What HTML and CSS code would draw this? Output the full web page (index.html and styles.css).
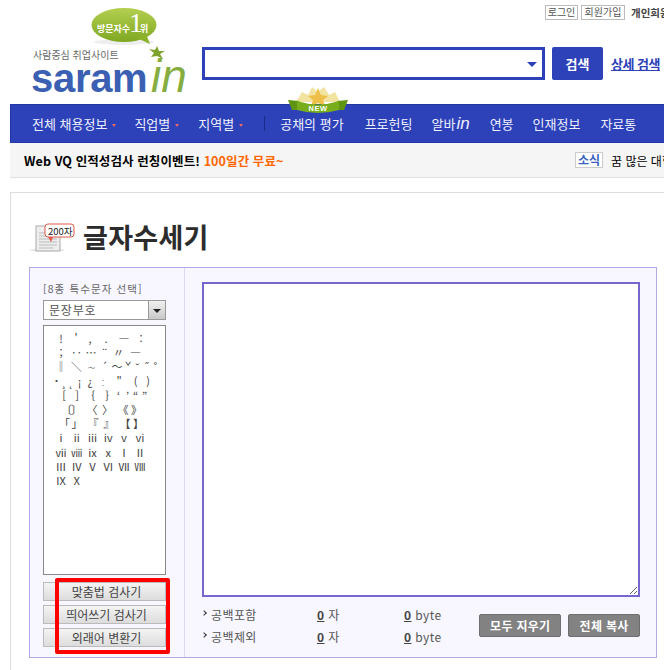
FILE: index.html
```html
<!DOCTYPE html>
<html lang="ko">
<head>
    <meta charset="UTF-8">
    <title>글자수세기</title>
    <link rel="stylesheet" href="styles.css">
</head>
<body>
<div class="page">
    <div class="header">
        <svg class="logo" width="192" height="104" viewBox="0 0 192 104">
            <defs>
                <linearGradient id="bub" x1="0" y1="0" x2="0" y2="1">
                    <stop offset="0" stop-color="#b4cf50"/>
                    <stop offset="1" stop-color="#7fa822"/>
                </linearGradient>
            </defs>
            <ellipse cx="124" cy="42" rx="30" ry="3" fill="#eee"/>
            <ellipse cx="124" cy="25" rx="32.5" ry="17" fill="url(#bub)"/>
            <path d="M137 38 L150 44 L146 34 Z" fill="#8bb02a"/>
            <text x="97" y="32" class="bub-text">방문자수</text>
            <text x="129" y="32" class="bub-one">1</text>
            <text x="140" y="32" class="bub-text">위</text>
            <text x="33" y="59" class="tagline">사람중심 취업사이트</text>
            <path d="M157 46 L159 51 L165 51 L160 54 L163 59 L157 56 L151 57 L154 53 L149 49 L155 50 Z" fill="#7da32e"/>
            <text x="31" y="92" class="saram">saram</text>
            <text x="151" y="92" class="in">in</text>
        </svg>
        <div class="head-right">
            <div class="util">
                <a class="util-btn">로그인</a>
                <a class="util-btn wide">회원가입</a>
                <b class="util-now">개인회원</b>
            </div>
            <div class="search">
                <div class="search-box"><span class="search-arrow"></span></div>
                <button class="search-btn">검색</button>
                <a class="search-more">상세 검색</a>
            </div>
        </div>
    </div>

    <div class="nav">
        <a class="n1">전체 채용정보<i class="caret"></i></a>
        <a class="n2">직업별<i class="caret"></i></a>
        <a class="n3">지역별<i class="caret"></i></a>
        <span class="nav-div"></span>
        <a class="n4">공채의 평가</a>
        <a class="n5">프로헌팅</a>
        <a class="n6">알바<em>in</em></a>
        <a class="n7">연봉</a>
        <a class="n8">인재정보</a>
        <a class="n9">자료통</a>
        <svg class="new-badge" width="60" height="28" viewBox="0 0 60 28">
            <path d="M8 16 L14 6 L20 9 L24 1 L30 6 L36 1 L41 9 L47 6 L52 16 Z" fill="#f3e3a0"/>
            <path d="M30 2 L33 9 L40 10 L35 14 L37 20 L30 17 L23 20 L25 14 L20 10 L27 9 Z" fill="#eec04a"/>
            <path d="M0 14 L11 15 L11 24 L4 24 Z M60 14 L49 15 L49 24 L56 24 Z" fill="#5f9412"/>
            <path d="M9 15 Q30 22 51 15 L51 24 Q30 30 9 24 Z" fill="#78ae1c"/>
            <text x="30" y="25" class="new-text">NEW</text>
        </svg>
    </div>

    <div class="notice">
        <div class="notice-main">Web VQ 인적성검사 런칭이벤트! <span>100일간 무료~</span></div>
        <div class="notice-news"><span class="news-tag">소식</span>꿈 많은 대학생</div>
    </div>

    <div class="card">
        <div class="title">
            <svg width="46" height="32" viewBox="0 0 46 32">
                <ellipse cx="18" cy="29" rx="18" ry="1.5" fill="#e4e4e4"/>
                <rect x="7" y="5" width="24" height="25" fill="#eee" stroke="#aaa"/>
                <path d="M10 12h18M10 15h18M10 18h18M10 21h18M10 24h18M10 27h14" stroke="#bbb"/>
                <path d="M19 16 L22 21 L24 16 Z" fill="#e85a4a"/>
                <rect x="16" y="3" width="29" height="13" rx="3" fill="#fff" stroke="#e05a4a"/>
                <text x="19" y="13.5" class="icon-text">200자</text>
            </svg>
            <h1>글자수세기</h1>
        </div>
        <div class="panel">
            <div class="side">
                <div class="side-label">[8종 특수문자 선택]</div>
                <div class="select">문장부호<span class="select-btn"></span></div>
                <div class="chars">
                    <div class="r r1"><span>!</span><span>'</span><span>,</span><span>.</span><span>―</span><span>:</span></div>
                    <div class="r r2"><span>;</span><span>‥</span><span>…</span><span>¨</span><span>〃</span><span>―</span></div>
                    <div class="r r3"><span>‖</span><span>＼</span><span>∼</span><span>´</span><span>～</span><span>ˇ</span><span>˘</span><span>˝</span><span>˚</span></div>
                    <div class="r r4"><span>˙</span><span>¸</span><span>˛</span><span>¡</span><span>¿</span><span>ː</span><span>"</span><span>(</span><span>)</span></div>
                    <div class="r r5"><span>[</span><span>]</span><span>{</span><span>}</span><span>‘</span><span>’</span><span>“</span><span>”</span></div>
                    <div class="r r6"><span>〔</span><span>〕</span><span>〈</span><span>〉</span><span>《</span><span>》</span></div>
                    <div class="r r7"><span>「</span><span>」</span><span>『</span><span>』</span><span>【</span><span>】</span></div>
                    <div class="r r8"><span>ⅰ</span><span>ⅱ</span><span>ⅲ</span><span>ⅳ</span><span>ⅴ</span><span>ⅵ</span></div>
                    <div class="r r8"><span>ⅶ</span><span>ⅷ</span><span>ⅸ</span><span>ⅹ</span><span>Ⅰ</span><span>Ⅱ</span></div>
                    <div class="r r8"><span>Ⅲ</span><span>Ⅳ</span><span>Ⅴ</span><span>Ⅵ</span><span>Ⅶ</span><span>Ⅷ</span></div>
                    <div class="r r8"><span>Ⅸ</span><span>Ⅹ</span></div>
                </div>
                <div class="tools">
                    <button>맞춤법 검사기</button>
                    <button>띄어쓰기 검사기</button>
                    <button>외래어 변환기</button>
                </div>
                <div class="mark"></div>
            </div>
            <div class="main">
                <textarea class="text-in"></textarea>
                <div class="foot">
                    <div class="counts">
                        <div class="count"><span class="count-label">공백포함</span><span class="count-a"><u>0</u> 자</span><span><u>0</u> byte</span></div>
                        <div class="count"><span class="count-label">공백제외</span><span class="count-a"><u>0</u> 자</span><span><u>0</u> byte</span></div>
                    </div>
                    <button class="gray-btn wide">모두 지우기</button>
                    <button class="gray-btn">전체 복사</button>
                </div>
            </div>
        </div>
    </div>
</div>
</body>
</html>
```

FILE: styles.css
```css
html, body {
    margin: 0;
    overflow: hidden;
    height: 670px;
}

body {
    font-family: "Noto Sans CJK KR", "Liberation Sans", sans-serif;
    font-size: 12px;
    color: #444;
    background: #fff;
}

.page {
    width: 720px;
}

/* header */
.header {
    display: flex;
    height: 104px;
}

.logo {
    display: block;
    width: 192px;
    flex: none;
}

.bub-text {
    font-size: 9px;
    font-weight: 700;
    fill: #fff;
}

.bub-one {
    font-family: "Liberation Serif", serif;
    font-size: 28px;
    fill: #fff;
}

.tagline {
    font-size: 10px;
    fill: #666;
}

.saram {
    font-family: "Liberation Sans", sans-serif;
    font-size: 40px;
    font-weight: 700;
    fill: #3b5fb3;
    letter-spacing: -.3px;
}

.in {
    font-family: "Liberation Sans", sans-serif;
    font-size: 46px;
    font-style: italic;
    fill: #86ad3f;
}

.head-right {
    margin-left: 10px;
    flex: 1;
}

.util {
    display: flex;
    align-items: center;
    gap: 3px;
    margin: 5px 0 0 343px;
    height: 15px;
}

.util-btn {
    box-sizing: border-box;
    width: 33px;
    height: 15px;
    border: 1px solid #bbb;
    line-height: 12px;
    font-size: 10px;
    color: #555;
    text-align: center;
    white-space: nowrap;
}

.util-btn.wide {
    width: 44px;
}

.util-now {
    margin-left: 3px;
    font-size: 10.5px;
    color: #444;
    white-space: nowrap;
}

.search {
    display: flex;
    margin-top: 27px;
    height: 33px;
}

.search-box {
    width: 337px;
    border: 3px solid #2d41b9;
    position: relative;
}

.search-arrow {
    position: absolute;
    right: 5px;
    top: 12px;
    border-left: 5px solid transparent;
    border-right: 5px solid transparent;
    border-top: 5px solid #2d41b9;
}

.search-btn {
    width: 51px;
    margin-left: 7px;
    padding: 0;
    border: 0;
    border-radius: 2px;
    background: #2d41b9;
    color: #fff;
    font: 700 13px "Noto Sans CJK KR", sans-serif;
}

.search-more {
    margin-left: 8px;
    line-height: 33px;
    font-size: 13px;
    font-weight: 700;
    color: #2d41b9;
    text-decoration: underline;
    letter-spacing: -.5px;
}

/* nav */
.nav {
    position: relative;
    display: flex;
    align-items: center;
    height: 37px;
    margin-left: 10px;
    padding-left: 21px;
    background: #2d41b9;
    border: 1px solid #2436a3;
    border-right: 0;
    color: #eef0ff;
    font-size: 13px;
}

.nav a {
    white-space: nowrap;
}

.caret {
    display: inline-block;
    margin-left: 5px;
    vertical-align: middle;
    border-left: 2.5px solid transparent;
    border-right: 2.5px solid transparent;
    border-top: 3px solid #e86a6a;
}

.n2 { margin-left: 18px; }
.n3 { margin-left: 19px; }
.n4 { margin-left: 15px; }
.n5 { margin-left: 21px; }
.n6 { margin-left: 19px; }
.n7 { margin-left: 20px; }
.n8 { margin-left: 19px; }
.n9 { margin-left: 20px; }

.nav em {
    font-family: "Liberation Sans", sans-serif;
    font-size: 17px;
    line-height: 1;
    margin-left: 1px;
}

.nav-div {
    width: 1px;
    height: 15px;
    margin-left: 21px;
    background: #1b2b8c;
}

.new-badge {
    position: absolute;
    left: 277px;
    top: -19px;
}

.new-text {
    font: 700 7.5px "Liberation Sans", sans-serif;
    fill: #fff;
    text-anchor: middle;
    letter-spacing: .5px;
}

/* notice */
.notice {
    display: flex;
    justify-content: space-between;
    align-items: center;
    height: 34px;
    margin-left: 10px;
    padding-left: 14px;
    background: #f5f5f5;
    border-bottom: 1px solid #e2e2e2;
    color: #000;
}

.notice-main {
    font-size: 12.5px;
    font-weight: 700;
    letter-spacing: .1px;
}

.notice-main span {
    color: #f60;
}

.notice-news {
    display: flex;
    align-items: center;
    width: 145px;
    white-space: nowrap;
}

.news-tag {
    box-sizing: border-box;
    width: 28px;
    height: 16px;
    margin-right: 8px;
    border: 1px solid #ccc;
    background: #fff;
    color: #3a5fc0;
    font-weight: 700;
    line-height: 13px;
    text-align: center;
}

/* card */
.card {
    margin: 14px 0 0 10px;
    padding: 0 0 13px 18px;
    border: 1px solid #ddd;
    border-right: 0;
}

.title {
    display: flex;
    align-items: center;
    height: 74px;
    padding-top: 14px;
    box-sizing: border-box;
    gap: 8px;
}

.title svg {
    flex: none;
}

.title h1 {
    margin: 0;
    font-size: 27px;
    font-weight: 700;
    line-height: 36px;
    color: #2c2c2c;
    letter-spacing: .3px;
}

.icon-text {
    font-size: 9.5px;
    fill: #222;
}

.panel {
    display: flex;
    box-sizing: border-box;
    width: 628px;
    height: 391px;
    background: #f8f7ff;
    border: 1px solid #b3a8e4;
}

.side {
    position: relative;
    box-sizing: border-box;
    width: 155px;
    padding: 13px 18px 0 13px;
    border-right: 1px solid #dcd8f2;
}

.side-label {
    height: 19px;
    font-size: 10.5px;
    line-height: 15px;
    color: #666;
    letter-spacing: 1.1px;
    white-space: nowrap;
}

.select {
    position: relative;
    box-sizing: border-box;
    height: 20px;
    padding-left: 5px;
    border: 1px solid #999;
    background: #fff;
    line-height: 17px;
    letter-spacing: .8px;
    color: #555;
}

.select-btn {
    position: absolute;
    right: 0;
    top: 0;
    width: 16px;
    height: 18px;
    border-left: 1px solid #999;
    background: linear-gradient(#f0f0f0, #c8c8c8);
}

.select-btn::after {
    content: "";
    position: absolute;
    left: 4px;
    top: 8px;
    border-left: 4px solid transparent;
    border-right: 4px solid transparent;
    border-top: 4px solid #222;
}

.chars {
    box-sizing: border-box;
    height: 250px;
    margin-top: 5px;
    padding-top: 5px;
    border: 1px solid #888;
    background: #fff;
    overflow: hidden;
}

.r {
    display: grid;
    height: 14.2px;
    margin-left: 9px;
    font-size: 11px;
    line-height: 14px;
    color: #444;
}

.r span {
    text-align: center;
    white-space: nowrap;
}

/* each row of marks has its own spacing */
.r1 { grid-template-columns: 16px 14px 14px 18px 18px 16px; }
.r2 { grid-template-columns: 16px 15px 14px 13px 15px 19px; }
.r3 { grid-template-columns: 16px 15px 14px 13px 12px 10px 9px 9px 9px; }
.r4 { grid-template-columns: 7px 7px 8px 9px 12px 14px 18px 15px 10px; }
.r5 { grid-template-columns: 10px 16px 16px 12px 11px 7px 9px 9px; margin-left: 15px; }
.r6 { grid-template-columns: 8px 15px 16px 15px 16px 11px; margin-left: 17px; }
.r7 { grid-template-columns: 10px 16px 16px 16px 16px 9px; margin-left: 15px; }
.r8 { grid-template-columns: repeat(6, 15.8px); }

.tools {
    display: flex;
    flex-direction: column;
    gap: 4px;
    margin-top: 7px;
}

.tools button {
    height: 19px;
    padding: 0 0 0 4px;
    border: 1px solid #bbb;
    background: linear-gradient(#f4f4f4, #dcdcdc);
    color: #444;
    font: 12px "Noto Sans CJK KR", sans-serif;
    line-height: 16px;
}

.mark {
    position: absolute;
    left: 25px;
    top: 310px;
    width: 107px;
    height: 68px;
    border: 4px solid #f00;
    border-radius: 2px;
}

.main {
    padding: 14px 0 0 17px;
    width: 438px;
}

.text-in {
    display: block;
    box-sizing: border-box;
    width: 438px;
    height: 315px;
    margin: 0;
    border: 2px solid #7766cc;
    background: #fff;
    outline: 0;
}

.foot {
    display: flex;
    align-items: center;
    margin-top: 6px;
}

.counts {
    width: 278px;
}

.count {
    display: flex;
    height: 22px;
    align-items: center;
    color: #555;
    letter-spacing: .4px;
}

.count-label {
    box-sizing: border-box;
    width: 115px;
    padding-left: 9px;
    position: relative;
}

.count-label::before {
    content: "";
    position: absolute;
    left: 0;
    top: 5px;
    width: 3px;
    height: 3px;
    border-top: 1px solid #333;
    border-right: 1px solid #333;
    transform: rotate(45deg);
}

.count-a {
    width: 87px;
}

.count u {
    font-weight: 700;
    color: #444;
}

.gray-btn {
    box-sizing: border-box;
    width: 72px;
    height: 23px;
    margin-left: 7px;
    padding: 0;
    border: 1px solid #6e6e6e;
    border-radius: 2px;
    background: #828282;
    color: #fff;
    font: 700 12px "Noto Sans CJK KR", sans-serif;
    letter-spacing: .3px;
    white-space: nowrap;
}

.gray-btn.wide {
    width: 82px;
    margin-left: 0;
}
```
